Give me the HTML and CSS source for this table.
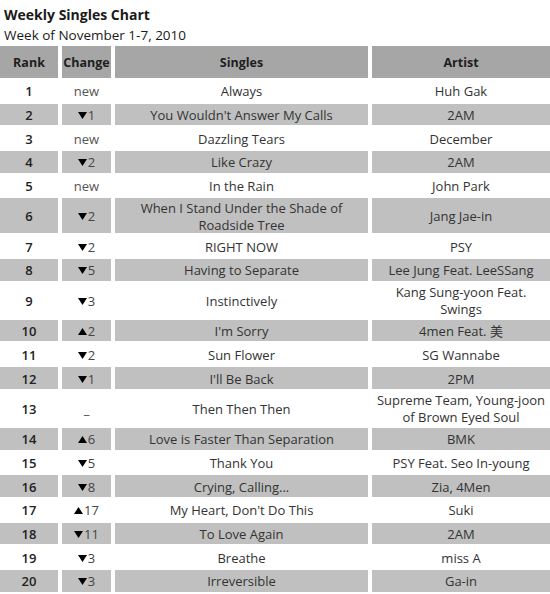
FILE: index.html
```html
<!DOCTYPE html>
<html>
<head>
<meta charset="utf-8">
<link rel="stylesheet" href="styles.css">
</head>
<body>
<div class="page">
  <div class="title">Weekly Singles Chart</div>
  <div class="subtitle">Week of November 1-7, 2010</div>
  <div class="chart">
    <div class="row head"><div>Rank</div><div>Change</div><div>Singles</div><div>Artist</div></div>

    <div class="row"><div class="rank">1</div><div class="chg new">new</div><div>Always</div><div>Huh Gak</div></div>
    <div class="row alt"><div class="rank">2</div><div class="chg"><svg class="tri" viewBox="0 0 9 7"><path d="M0 0H9L4.5 7Z"/></svg>1</div><div>You Wouldn't Answer My Calls</div><div>2AM</div></div>
    <div class="row"><div class="rank">3</div><div class="chg new">new</div><div>Dazzling Tears</div><div>December</div></div>
    <div class="row alt"><div class="rank">4</div><div class="chg"><svg class="tri" viewBox="0 0 9 7"><path d="M0 0H9L4.5 7Z"/></svg>2</div><div>Like Crazy</div><div>2AM</div></div>
    <div class="row"><div class="rank">5</div><div class="chg new">new</div><div>In the Rain</div><div>John Park</div></div>
    <div class="row alt tall"><div class="rank">6</div><div class="chg"><svg class="tri" viewBox="0 0 9 7"><path d="M0 0H9L4.5 7Z"/></svg>2</div><div>When I Stand Under the Shade of<br>Roadside Tree</div><div>Jang Jae-in</div></div>
    <div class="row"><div class="rank">7</div><div class="chg"><svg class="tri" viewBox="0 0 9 7"><path d="M0 0H9L4.5 7Z"/></svg>2</div><div>RIGHT NOW</div><div>PSY</div></div>
    <div class="row alt"><div class="rank">8</div><div class="chg"><svg class="tri" viewBox="0 0 9 7"><path d="M0 0H9L4.5 7Z"/></svg>5</div><div>Having to Separate</div><div>Lee Jung Feat. LeeSSang</div></div>
    <div class="row tall"><div class="rank">9</div><div class="chg"><svg class="tri" viewBox="0 0 9 7"><path d="M0 0H9L4.5 7Z"/></svg>3</div><div>Instinctively</div><div>Kang Sung-yoon Feat.<br>Swings</div></div>
    <div class="row alt"><div class="rank">10</div><div class="chg"><svg class="tri" viewBox="0 0 9 7"><path d="M0 7H9L4.5 0Z"/></svg>2</div><div>I'm Sorry</div><div>4men Feat. 美</div></div>
    <div class="row"><div class="rank">11</div><div class="chg"><svg class="tri" viewBox="0 0 9 7"><path d="M0 0H9L4.5 7Z"/></svg>2</div><div>Sun Flower</div><div>SG Wannabe</div></div>
    <div class="row alt"><div class="rank">12</div><div class="chg"><svg class="tri" viewBox="0 0 9 7"><path d="M0 0H9L4.5 7Z"/></svg>1</div><div>I'll Be Back</div><div>2PM</div></div>
    <div class="row tall"><div class="rank">13</div><div class="chg">_</div><div>Then Then Then</div><div>Supreme Team, Young-joon<br>of Brown Eyed Soul</div></div>
    <div class="row alt"><div class="rank">14</div><div class="chg"><svg class="tri" viewBox="0 0 9 7"><path d="M0 7H9L4.5 0Z"/></svg>6</div><div>Love is Faster Than Separation</div><div>BMK</div></div>
    <div class="row"><div class="rank">15</div><div class="chg"><svg class="tri" viewBox="0 0 9 7"><path d="M0 0H9L4.5 7Z"/></svg>5</div><div>Thank You</div><div>PSY Feat. Seo In-young</div></div>
    <div class="row alt"><div class="rank">16</div><div class="chg"><svg class="tri" viewBox="0 0 9 7"><path d="M0 0H9L4.5 7Z"/></svg>8</div><div>Crying, Calling...</div><div>Zia, 4Men</div></div>
    <div class="row"><div class="rank">17</div><div class="chg"><svg class="tri" viewBox="0 0 9 7"><path d="M0 7H9L4.5 0Z"/></svg>17</div><div>My Heart, Don't Do This</div><div>Suki</div></div>
    <div class="row alt"><div class="rank">18</div><div class="chg"><svg class="tri" viewBox="0 0 9 7"><path d="M0 0H9L4.5 7Z"/></svg>11</div><div>To Love Again</div><div>2AM</div></div>
    <div class="row"><div class="rank">19</div><div class="chg"><svg class="tri" viewBox="0 0 9 7"><path d="M0 0H9L4.5 7Z"/></svg>3</div><div>Breathe</div><div>miss A</div></div>
    <div class="row alt"><div class="rank">20</div><div class="chg"><svg class="tri" viewBox="0 0 9 7"><path d="M0 0H9L4.5 7Z"/></svg>3</div><div>Irreversible</div><div>Ga-in</div></div>
  </div>
</div>
</body>
</html>
```
FILE: styles.css
```css
html, body {
  margin: 0;
  padding: 0;
  background: #ffffff;
}
.page {
  width: 550px;
  font-family: "Open Sans", "Noto Sans CJK KR", sans-serif;
  color: #333;
}
.title {
  font-size: 14px;
  font-weight: bold;
  line-height: 18px;
  padding: 6px 0 0 4px;
  color: #1a1a1a;
}
.subtitle {
  font-size: 13.5px;
  line-height: 16px;
  margin-top: 2.6px;
  padding-left: 4px;
  color: #1a1a1a;
}
.chart {
  margin-top: 3.4px;
  display: grid;
  grid-template-columns: 58px 49px 253px 1fr;
  column-gap: 4px;
  row-gap: 2px;
  font-size: 13px;
}
.row {
  display: contents;
}
.row > div {
  box-sizing: border-box;
  height: 21.7px;
  padding-top: 2px;
  display: flex;
  align-items: center;
  justify-content: center;
  text-align: center;
  line-height: 17px;
}
.row.tall > div {
  height: 35px;
}
.row.alt > div {
  background: #c0c0c0;
}
.row.head > div {
  height: 32px;
  background: #a6a6a6;
  font-weight: bold;
  font-size: 12.5px;
  color: #1e1e1e;
}
.rank {
  font-weight: 600;
  color: #222;
}
.chg {
  color: #444;
}
.chg.new {
  color: #555;
}
.tri {
  width: 9px;
  height: 7px;
  margin-right: 1px;
  fill: #000;
}
```
